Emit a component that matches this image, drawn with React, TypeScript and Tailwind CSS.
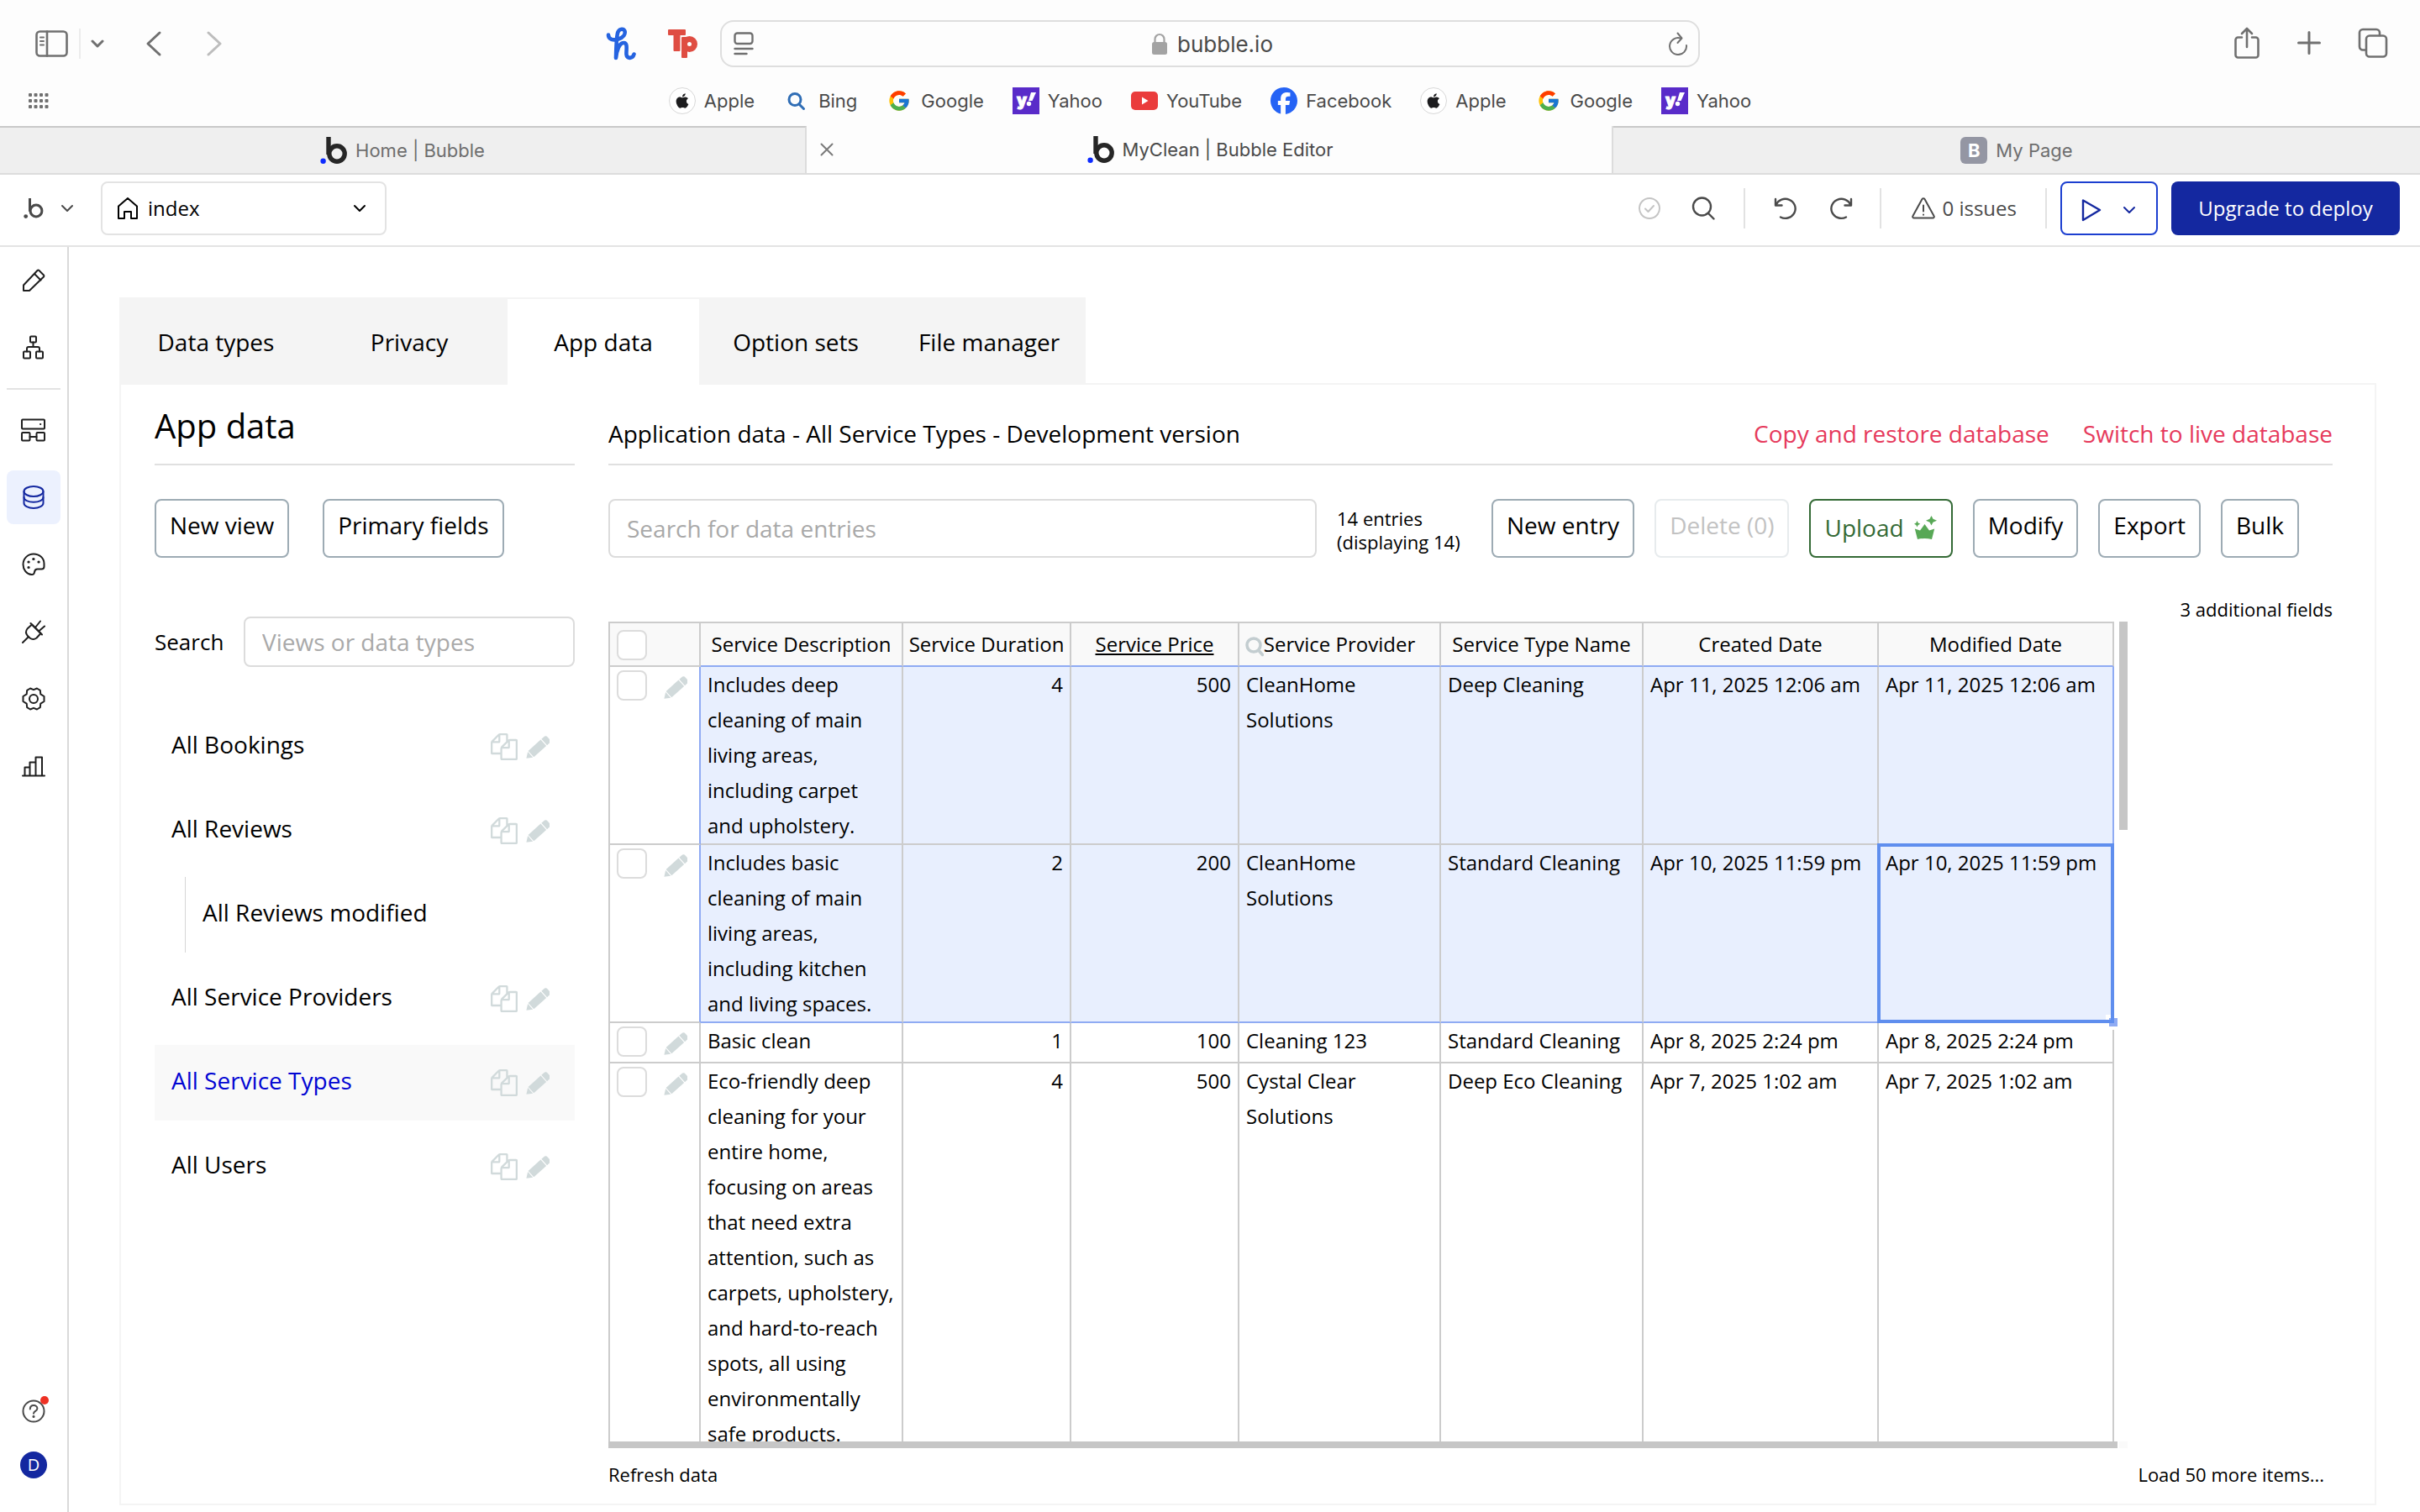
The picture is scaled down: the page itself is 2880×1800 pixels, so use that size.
import React from "react";
import { FaApple, FaFacebook } from "react-icons/fa6";
import { FcGoogle } from "react-icons/fc";

type IconProps = { className?: string };

function Stroke({
  className = "size-8",
  width = 2,
  box = "0 0 32 32",
  children,
}: {
  className?: string;
  width?: number;
  box?: string;
  children: React.ReactNode;
}) {
  return (
    <svg
      viewBox={box}
      className={className}
      fill="none"
      stroke="currentColor"
      strokeWidth={width}
      strokeLinecap="round"
      strokeLinejoin="round"
      aria-hidden="true"
    >
      {children}
    </svg>
  );
}

function Chevron({ className = "size-4" }: IconProps) {
  return (
    <Stroke className={className} box="0 0 16 16">
      <path d="M2 5l6 6 6-6" />
    </Stroke>
  );
}

function BubbleLogo({
  className = "size-8",
  dot = "#0d2bff",
  weight = 5.4,
}: IconProps & { dot?: string; weight?: number }) {
  return (
    <svg viewBox="0 0 32 32" className={className} fill="none" aria-hidden="true">
      <circle cx="20" cy="20" r="9.2" stroke="currentColor" strokeWidth={weight} />
      <path d="M10 0v21" stroke="currentColor" strokeWidth={weight} />
      <circle cx="3.6" cy="28.8" r="3.2" fill={dot} />
    </svg>
  );
}

function HoneyLogo() {
  return (
    <svg viewBox="0 0 36 40" className="h-10 w-9" fill="none" stroke="#2563e0" strokeLinecap="round" strokeLinejoin="round" aria-hidden="true">
      <path
        strokeWidth="4.6"
        d="M3 9.500C3 15 9 16.500 15 14.500C21 12.500 23.500 8.500 22.500 5C21.500 2 16.500 1.800 14.500 6C12.500 10.500 12.500 20 12 37C13 28 16 19 21.500 19C26.500 19 24 28 24.500 33C25 38.500 32 38 33.500 32.500"
      />
    </svg>
  );
}

function TpLogo() {
  return (
    <svg viewBox="0 0 36 36" className="size-9" fill="#df4d42" aria-hidden="true">
      <rect x="0" y="1" width="21" height="7" rx="1" />
      <rect x="6.500" y="1" width="8" height="26" rx="1" />
      <rect x="16" y="10" width="7" height="25" rx="1" />
      <circle cx="25.500" cy="18.500" r="6" fill="none" stroke="#df4d42" strokeWidth="7" />
    </svg>
  );
}

function YahooLogo() {
  return (
    <svg viewBox="0 0 32 32" className="size-8" aria-hidden="true">
      <rect width="32" height="32" fill="#592bc9" />
      <text x="5" y="22" fill="#fff" stroke="#fff" fontFamily="Inter, sans-serif" fontWeight="900" fontSize="19">y</text>
      <path d="M22 6h6l-4.500 10h-4.500z" fill="#fff" />
      <circle cx="19.500" cy="19.500" r="2.700" fill="#fff" />
    </svg>
  );
}

function YouTubeLogo() {
  return (
    <svg viewBox="0 0 32 32" className="size-8" aria-hidden="true">
      <rect y="5" width="32" height="22" rx="5" fill="#ea3c3c" />
      <path d="M13 11.500v9l7.500-4.500z" fill="#fff" />
    </svg>
  );
}

function AppleLogo() {
  return (
    <span className="flex size-8 items-center justify-center rounded-full border border-[#d8d8d8] bg-white text-[#1c1c1e]">
      <FaApple className="size-5" />
    </span>
  );
}

function BingLogo() {
  return (
    <Stroke className="size-8 text-[#2f6db5]" width={3}>
      <circle cx="14" cy="14.500" r="7" />
      <path d="M19 20l5.500 5.500" />
    </Stroke>
  );
}

function GoogleLogo() {
  return (
    <span className="flex size-8 items-center justify-center">
      <FcGoogle className="size-7" />
    </span>
  );
}

function FacebookLogo() {
  return <FaFacebook className="size-8 text-[#2563f5]" />;
}

function PencilIcon() {
  return (
    <svg viewBox="0 0 28 28" className="size-7" fill="#d1dadb" aria-hidden="true">
      <g transform="translate(0 28) rotate(-42)">
        <path d="M0.500 0l6.500-4.500v9z" />
        <path d="M8 -5h20v10h-20z" />
        <path d="M29.200 -5h3.500q3.500 0 3.500 3.500v3q0 3.500-3.500 3.500h-3.500z" />
      </g>
    </svg>
  );
}

function CopyIcon() {
  return (
    <svg viewBox="0 0 1792 1792" className="size-8" fill="#d1dadb" aria-hidden="true">
      <path d="M1696 384q40 0 68 28t28 68v1216q0 40-28 68t-68 28h-960q-40 0-68-28t-28-68v-288h-544q-40 0-68-28t-28-68v-672q0-40 20-88t48-76l408-408q28-28 76-48t88-20h416q40 0 68 28t28 68v328q68-40 128-40h416zm-544 213l-299 299h299v-299zm-640-384l-299 299h299v-299zm196 647l316-316v-416h-384v416q0 40-28 68t-68 28h-416v640h512v-256q0-40 20-88t48-76zm956 804v-1152h-384v416q0 40-28 68t-68 28h-416v640h896z" />
    </svg>
  );
}

function CrownIcon() {
  return (
    <svg viewBox="0 0 28 28" className="size-7" fill="#58a856" aria-hidden="true">
      <path d="M0.800 15.500l6.200 2 5.500-7.500 5.500 7.500 6.200-2-3.200 12.500q-8.500-2-17 0z" />
      <path d="M20.500 0l2 3.700 4.500 2-4.500 2-2 3.700-2-3.700-4.500-2 4.500-2z" />
      <path d="M3.500 6l1.200 2.600 2.600 1.200-2.600 1.200-1.200 2.600-1.200-2.600-2.300-1.200 2.300-1.200z" />
    </svg>
  );
}

const favorites = [
  { label: "Apple", Icon: AppleLogo },
  { label: "Bing", Icon: BingLogo },
  { label: "Google", Icon: GoogleLogo },
  { label: "Yahoo", Icon: YahooLogo },
  { label: "YouTube", Icon: YouTubeLogo },
  { label: "Facebook", Icon: FacebookLogo },
  { label: "Apple", Icon: AppleLogo },
  { label: "Google", Icon: GoogleLogo },
  { label: "Yahoo", Icon: YahooLogo },
];

function BrowserChrome() {
  return (
    <header className="shrink-0 bg-[#fdfdfd] font-['Inter',sans-serif] text-[22px] text-[#4a4a4a]">
      <div className="grid h-[104px] grid-cols-[857px_1fr_857px] items-center text-[#707070]">
        <div className="flex items-center">
          <button aria-label="Show sidebar" className="ml-[42px]">
            <Stroke className="h-8 w-10" box="0 0 40 32" width={2.6}>
              <rect x="1.500" y="1.500" width="36" height="29" rx="4" />
              <path d="M14 1.500v29" />
              <path d="M6 8.500h4M6 13h4M6 17.500h4" strokeWidth="2" />
            </Stroke>
          </button>
          <span className="ml-3 h-9 w-0.5 bg-[#ececec]" />
          <button aria-label="Tab groups" className="ml-3">
            <Stroke className="size-4" box="0 0 16 16" width={3}>
              <path d="M2 5l6 6 6-6" />
            </Stroke>
          </button>
          <button aria-label="Back" className="ml-[49px]">
            <Stroke className="h-8 w-5" box="0 0 20 32" width={3}>
              <path d="M17 3L3 16l14 13" />
            </Stroke>
          </button>
          <button aria-label="Forward" className="ml-[52px] text-[#bdbdbd]">
            <Stroke className="h-8 w-5" box="0 0 20 32" width={3}>
              <path d="M3 3l14 13L3 29" />
            </Stroke>
          </button>
          <div className="mr-[26px] ml-auto flex items-center gap-[38px]">
            <button aria-label="Honey"><HoneyLogo /></button>
            <button aria-label="Toolbar extension"><TpLogo /></button>
          </div>
        </div>
        <div className="flex h-14 items-center rounded-2xl border-2 border-[#dedede] pr-3 pl-3.5">
          <button aria-label="Page settings">
            <Stroke className="h-7 w-6" box="0 0 24 28" width={2.4}>
              <rect x="1.500" y="1.500" width="21" height="12.500" rx="3" />
              <path d="M1.500 20h21M1.500 26h14" />
            </Stroke>
          </button>
          <div className="ml-1 flex flex-1 items-center justify-center gap-3">
            <svg viewBox="0 0 18 26" className="h-[26px] w-[18px]" aria-hidden="true">
              <rect y="11" width="18" height="15" rx="2.500" fill="#a3a3a3" />
              <path d="M3.500 12V7.500a5.500 5.500 0 0 1 11 0V12" fill="none" stroke="#a3a3a3" strokeWidth="2.200" />
            </svg>
            <input
              aria-label="Address"
              defaultValue="bubble.io"
              className="field-sizing-content bg-transparent text-[26px] text-[#4a4a4a] outline-none"
            />
          </div>
          <button aria-label="Reload">
            <Stroke className="h-7 w-6" box="0 0 24 28" width={2}>
              <path d="M15 7.500A10 10 0 1 0 22 16" />
              <path d="M11.500 1.500l5 6-5 5.500" />
            </Stroke>
          </button>
        </div>
        <div className="flex items-center justify-end gap-11 pr-[38px] pb-0.5">
          <button aria-label="Share">
            <Stroke className="h-10 w-8" box="0 0 32 40" width={2.6}>
              <path d="M10 13.500H5.500a3 3 0 0 0-3 3v18a3 3 0 0 0 3 3h21a3 3 0 0 0 3-3v-18a3 3 0 0 0-3-3H22" />
              <path d="M16 25V3M10 9l6-6 6 6" />
            </Stroke>
          </button>
          <button aria-label="New tab">
            <Stroke className="size-7" box="0 0 28 28" width={3}>
              <path d="M14 1.500v25M1.500 14h25" />
            </Stroke>
          </button>
          <button aria-label="Show all tabs">
            <Stroke className="size-9" box="0 0 36 36" width={2.6}>
              <rect x="10" y="9.500" width="24" height="25" rx="4" />
              <path d="M9.500 26.500H6a4 4 0 0 1-4-4V6a4 4 0 0 1 4-4h16a4 4 0 0 1 4 4v3" />
            </Stroke>
          </button>
        </div>
      </div>
      <div className="grid h-[46px] grid-cols-[1fr_auto_1fr] items-start">
        <button aria-label="Favorites grid" className="ml-[34px] mt-[7px] w-6 text-[#707070]">
          <svg viewBox="0 0 24 18" className="h-[18px] w-6" fill="currentColor" aria-hidden="true">
            {[0, 7, 14].map((y) =>
              [0, 6.5, 13, 19.5].map((x) => <rect key={`${x}-${y}`} x={x} y={y} width="4" height="4" rx="1" />)
            )}
          </svg>
        </button>
        <nav aria-label="Favorites" className="flex h-8 items-center gap-[34px]">
          {favorites.map(({ label, Icon }, i) => (
            <a key={i} href="#" className="flex items-center gap-2.5">
              <Icon />
              {label}
            </a>
          ))}
        </nav>
        <span />
      </div>
      <div role="tablist" aria-label="Browser tabs" className="grid h-[58px] grid-cols-3 border-b-2 border-[#dcdcdc]">
        <button role="tab" className="flex items-center justify-center gap-2.5 border-t-2 border-r-2 border-t-[#c9c9c9] border-r-[#dcdcdc] bg-[#efefef] text-[#6e6e6e]">
          <BubbleLogo className="size-8 text-[#262626]" />
          Home | Bubble
        </button>
        <div className="flex items-center border-r-2 border-[#dcdcdc]">
          <button aria-label="Close tab" className="ml-4 w-4 text-[#7a7a7a]">
            <Stroke className="size-4" box="0 0 16 16">
              <path d="M1.500 1.500l13 13M14.500 1.500l-13 13" />
            </Stroke>
          </button>
          <button role="tab" aria-selected="true" className="mr-[30px] flex flex-1 items-center justify-center gap-2.5">
            <BubbleLogo className="size-8 text-[#262626]" />
            MyClean | Bubble Editor
          </button>
        </div>
        <button role="tab" className="flex items-center justify-center gap-2.5 border-t-2 border-[#c9c9c9] bg-[#efefef] text-[#6e6e6e]">
          <span className="flex size-8 items-center justify-center rounded-md bg-[#9496a3] font-bold text-white">B</span>
          My Page
        </button>
      </div>
    </header>
  );
}

function Separator() {
  return <span className="h-12 w-0.5 shrink-0 bg-[#e2e2e2]" />;
}

function EditorBar() {
  return (
    <div className="flex h-[86px] shrink-0 items-center border-b-2 border-[#e3e3e3] pr-6 pb-1 text-2xl text-[#4a4a4a]">
      <button aria-label="Bubble menu" className="ml-7 flex w-[92px] items-center gap-5">
        <BubbleLogo className="size-6" dot="#4a4a4a" weight={4} />
        <Chevron />
      </button>
      <div className="relative h-16 w-[340px]">
        <select
          aria-label="Page"
          className="h-full w-full appearance-none rounded-lg border-2 border-[#e3e3e3] bg-white pl-[54px] text-black"
        >
          <option>index</option>
        </select>
        <Stroke className="pointer-events-none absolute top-[18px] left-[18px] size-7 text-black" box="0 0 28 28">
          <path d="M3 11.500L14 2l11 9.500V26h-7v-8h-8v8H3z" />
        </Stroke>
        <Chevron className="pointer-events-none absolute top-6 right-6 size-4 text-black" />
      </div>
      <div className="ml-auto flex items-center">
        <Stroke className="size-7 text-[#c4c4c4]" box="0 0 28 28">
          <circle cx="14" cy="14" r="12" />
          <path d="M9 14.500l3.500 3.500 6.500-7" />
        </Stroke>
        <button aria-label="Search" className="ml-9">
          <Stroke className="size-7" box="0 0 28 28" width={2.4}>
            <circle cx="12.500" cy="12" r="10.500" />
            <path d="M20 20l6.500 6.500" />
          </Stroke>
        </button>
        <span className="mx-[34px] flex"><Separator /></span>
        <button aria-label="Undo">
          <Stroke className="size-7" box="0 0 28 28" width={2.4}>
            <path d="M2 3v7.500h7.500" />
            <path d="M2.500 10A12 11.500 0 1 1 8 24.500" />
          </Stroke>
        </button>
        <button aria-label="Redo" className="ml-[38px]">
          <Stroke className="size-7" box="0 0 28 28" width={2.4}>
            <path d="M26 3v7.500h-7.500" />
            <path d="M25.500 10A12 11.500 0 1 0 20 24.500" />
          </Stroke>
        </button>
        <span className="mr-9 ml-8 flex"><Separator /></span>
        <button className="flex items-center gap-2 font-medium">
          <Stroke className="size-7" box="0 0 28 28">
            <path d="M12.500 3a1.800 1.800 0 0 1 3 0l11 20a1.600 1.600 0 0 1-1.500 2.500H3a1.600 1.600 0 0 1-1.500-2.500z" />
            <path d="M14 10.500v7M14 21.500v.3" />
          </Stroke>
          0 issues
        </button>
        <span className="mr-4 ml-[34px] flex"><Separator /></span>
        <button aria-label="Preview" className="flex h-16 w-[116px] items-center justify-between rounded-lg border-2 border-[#1c3fd0] pt-1 pr-6 pl-[22px] text-[#1428a0]">
          <Stroke className="size-7" box="0 0 28 28" width={2.4}>
            <path d="M3 2.500v23.500l20-12z" />
          </Stroke>
          <Chevron />
        </button>
        <button className="ml-4 h-16 w-[272px] rounded-lg bg-[#1428a0] text-white">Upgrade to deploy</button>
      </div>
    </div>
  );
}

const railIcons = {
  Design: (
    <>
      <path d="M4 28v-6.500L20.500 4a1.500 1.500 0 0 1 2 0l5.500 5.500a1.500 1.500 0 0 1 0 2L11 28z" />
      <path d="M17 8l7.500 7.500" />
    </>
  ),
  Workflow: (
    <>
      <rect x="12" y="2.500" width="7" height="7" rx="1" />
      <rect x="4" y="20.500" width="8" height="8" rx="1" />
      <rect x="19" y="20.500" width="8" height="8" rx="1" />
      <path d="M15.500 9.500V15M8 20.500V17q0-2 2-2h11q2 0 2 2v3.500" />
    </>
  ),
  Components: (
    <>
      <rect x="2" y="3.500" width="27" height="11" rx="1" />
      <rect x="2" y="19" width="9.500" height="9.500" rx="1" />
      <rect x="19.500" y="19" width="9.500" height="9.500" rx="1" />
      <path d="M11.500 24h8M24 9h.3" />
    </>
  ),
  Data: (
    <>
      <ellipse cx="16" cy="9" rx="11.500" ry="6" />
      <path d="M4.500 9v14c0 3.300 5 6 11.500 6s11.500-2.700 11.500-6V9" />
      <path d="M4.500 16c0 3.300 5 5.800 11.500 5.800s11.500-2.500 11.500-5.800" />
    </>
  ),
  Styles: (
    <>
      <path d="M16 3.500c7 0 12.500 5 12.500 11.500v3.500q0 3-3 3h-5q-3 0-3.500 3.500t-3.500 3C7.500 27.500 3.500 22 3.500 16 3.500 9 9 3.500 16 3.500z" />
      <g strokeWidth="3.200">
        <path d="M15.800 9.500h.2M22 13h.1M10 13h.1M10 19.500h.1" />
      </g>
    </>
  ),
  Plugins: (
    <>
      <path d="M14 7.500L24.500 18l-5 5.500q-4 3-8 0l-3-3q-3-4 0-8z" />
      <path d="M9.500 22.500L3 29M18 11l6-7.500M22 15.500l7-6M12.500 6L26 19.500" />
    </>
  ),
  Settings: (
    <>
      <circle cx="16" cy="16" r="5" />
      <path d="M12 3.500l4 1.700 4-1.700 3.800 2.300.5 4.500 4.200 2.700v6l-4.200 2.700-.5 4.500L20 28.500l-4-1.700-4 1.700-3.800-2.300-.5-4.500L3.500 19v-6l4.200-2.700.5-4.500z" />
    </>
  ),
  Logs: (
    <>
      <path d="M3 27.500h26M5.500 27.500V17.500h6M11.500 27.500V11.500h7M18.500 27.500V5.500h7.500v22" />
    </>
  ),
};

function RailButton({ name, active = false }: { name: keyof typeof railIcons; active?: boolean }) {
  return (
    <button
      aria-label={name}
      className={
        active
          ? "flex size-16 items-center justify-center rounded-lg bg-[#ecf1fe] text-[#1428a0]"
          : "flex size-16 items-center justify-center text-[#1f1f1f]"
      }
    >
      <Stroke className="size-8">{railIcons[name]}</Stroke>
    </button>
  );
}

function Rail() {
  return (
    <nav aria-label="Editor sections" className="flex w-[82px] shrink-0 flex-col items-center gap-4 border-r-2 border-[#dadada] pt-2 pb-10">
      <RailButton name="Design" />
      <RailButton name="Workflow" />
      <span className="h-0.5 w-16 bg-[#e3e3e3]" />
      <RailButton name="Components" />
      <RailButton name="Data" active />
      <RailButton name="Styles" />
      <RailButton name="Plugins" />
      <RailButton name="Settings" />
      <RailButton name="Logs" />
      <button aria-label="Help" className="relative mt-auto mb-[18px] text-[#4a4a4a]">
        <Stroke className="size-7" box="0 0 28 28">
          <circle cx="14" cy="14" r="12.500" />
          <path d="M9.800 11.500c0-6 8.600-5.500 8.600-.8 0 3.300-4.400 3-4.400 6" />
          <path d="M14 20.300v.3" strokeWidth="3" />
        </Stroke>
        <span className="absolute -top-1 -right-1 size-2.5 rounded-full bg-[#ee3124]" />
      </button>
      <button aria-label="Account" className="flex size-8 items-center justify-center rounded-full bg-[#1428a0] text-xl leading-none text-white">
        D
      </button>
    </nav>
  );
}

const views = [
  { label: "All Bookings" },
  { label: "All Reviews" },
  { label: "All Reviews modified", child: true },
  { label: "All Service Providers" },
  { label: "All Service Types", selected: true },
  { label: "All Users" },
];

function ViewsColumn() {
  return (
    <aside className="flex w-[500px] shrink-0 flex-col">
      <h1 className="flex h-24 items-center border-b-2 border-[#e0e0e0] pt-1 text-[40px]">App data</h1>
      <div className="mt-10 flex gap-10">
        <ActionButton>New view</ActionButton>
        <ActionButton>Primary fields</ActionButton>
      </div>
      <div className="mt-[70px] flex h-[60px] items-center">
        <label htmlFor="view-search" className="w-[106px] text-[26px]">Search</label>
        <input
          id="view-search"
          placeholder="Views or data types"
          className="h-full min-w-0 flex-1 rounded-lg border-2 border-[#dcdcdc] px-5 placeholder:text-[#a9a9a9]"
        />
      </div>
      <ul className="mt-[50px] flex flex-col gap-2.5">
        {views.map((v) =>
          v.child ? (
            <li key={v.label} className="ml-9 flex h-[90px] items-center border-l border-[#d5d5d5] pb-1.5 pl-5">
              <a href="#">{v.label}</a>
            </li>
          ) : (
            <li
              key={v.label}
              className={
                v.selected
                  ? "flex h-[90px] items-center bg-[#f9f9f9] pr-[30px] pl-5 text-[#0205d3]"
                  : "flex h-[90px] items-center pr-[30px] pl-5"
              }
            >
              <a href="#" className="flex-1 pb-1.5">{v.label}</a>
              <button aria-label={`Copy ${v.label}`} className="mr-2.5"><CopyIcon /></button>
              <button aria-label={`Edit ${v.label}`}><PencilIcon /></button>
            </li>
          )
        )}
      </ul>
    </aside>
  );
}

function ActionButton({ children, disabled = false }: { children: React.ReactNode; disabled?: boolean }) {
  return (
    <button
      disabled={disabled}
      className={
        disabled
          ? "h-[70px] rounded-lg border-2 border-[#e7ebed] px-4 pb-2 whitespace-nowrap text-[#c2c2c2]"
          : "h-[70px] rounded-lg border-2 border-[#9dabb4] px-4 pb-2 whitespace-nowrap"
      }
    >
      {children}
    </button>
  );
}

type Entry = {
  description: string;
  duration: string;
  price: string;
  provider: string;
  type: string;
  created: string;
  modified: string;
};

const entries: Entry[] = [
  {
    description: "Includes deep cleaning of main living areas, including carpet and upholstery.",
    duration: "4",
    price: "500",
    provider: "CleanHome Solutions",
    type: "Deep Cleaning",
    created: "Apr 11, 2025 12:06 am",
    modified: "Apr 11, 2025 12:06 am",
  },
  {
    description: "Includes basic cleaning of main living areas, including kitchen and living spaces.",
    duration: "2",
    price: "200",
    provider: "CleanHome Solutions",
    type: "Standard Cleaning",
    created: "Apr 10, 2025 11:59 pm",
    modified: "Apr 10, 2025 11:59 pm",
  },
  {
    description: "Basic clean",
    duration: "1",
    price: "100",
    provider: "Cleaning 123",
    type: "Standard Cleaning",
    created: "Apr 8, 2025 2:24 pm",
    modified: "Apr 8, 2025 2:24 pm",
  },
  {
    description:
      "Eco-friendly deep cleaning for your entire home, focusing on areas that need extra attention, such as carpets, upholstery, and hard-to-reach spots, all using environmentally safe products.",
    duration: "4",
    price: "500",
    provider: "Cystal Clear Solutions",
    type: "Deep Eco Cleaning",
    created: "Apr 7, 2025 1:02 am",
    modified: "Apr 7, 2025 1:02 am",
  },
];

const checkboxClass = "block size-9 shrink-0 appearance-none rounded-lg border-2 border-[#dcdcdc] bg-white";

const tones = {
  plain: "border-[#cccccc]",
  selected: "border-[#cccccc] bg-[#e8effe]",
  selectedLast: "border-r-[#cccccc] border-b-[#8fabf3] bg-[#e8effe]",
};

function EntryRow({ entry, index }: { entry: Entry; index: number }) {
  const tone = index === 0 ? tones.selected : index === 1 ? tones.selectedLast : tones.plain;
  const current = index === 1;
  const cell = `border-r-2 border-b-2 px-2 ${tone}`;
  return (
    <tr className="h-12 align-top">
      <td
        className={
          index < 2
            ? "border-r-2 border-b-2 border-l-2 border-[#cccccc] border-r-[#8fabf3] pt-1"
            : "border-r-2 border-b-2 border-l-2 border-[#cccccc] pt-1"
        }
      >
        <div className="flex items-start pl-2">
          <input type="checkbox" aria-label={`Select ${entry.type} entry`} className={checkboxClass} />
          <button aria-label={`Edit ${entry.type} entry`} className="mt-1.5 ml-5"><PencilIcon /></button>
        </div>
      </td>
      <td className={cell}>{entry.description}</td>
      <td className={`${cell} text-right`}>{entry.duration}</td>
      <td className={`${cell} text-right`}>{entry.price}</td>
      <td className={cell}>{entry.provider}</td>
      <td className={cell}>{entry.type}</td>
      <td className={cell}>{entry.created}</td>
      <td className={index === 0 ? "border-r-2 border-b-2 border-[#cccccc] border-r-[#8fabf3] bg-[#e8effe] px-2" : `relative ${cell}`}>
        {entry.modified}
        {current && (
          <>
            <span className="absolute -right-2.5 -bottom-2.5 z-10 size-[18px] border-4 border-white bg-[#8fabf3]" />
            <span className="absolute -inset-0.5 z-20 border-4 border-[#5f8eee]" />
          </>
        )}
      </td>
    </tr>
  );
}

function EntriesTable() {
  const head = "border-t-2 border-r-2 border-b-2 border-[#cccccc] border-b-[#8fabf3] bg-[#f9f9f9] font-normal whitespace-nowrap";
  return (
    <table className="w-[1792px] table-fixed border-separate border-spacing-0 text-2xl leading-[42px]">
      <colgroup>
        <col className="w-[110px]" />
        <col className="w-[241px]" />
        <col className="w-[200px]" />
        <col className="w-[200px]" />
        <col className="w-[240px]" />
        <col className="w-[241px]" />
        <col className="w-[280px]" />
        <col className="w-[280px]" />
      </colgroup>
      <thead>
        <tr className="h-[54px]">
          <th className="border-2 border-[#cccccc] bg-[#f9f9f9] pt-0.5">
            <input type="checkbox" aria-label="Select all entries" className={`ml-2 ${checkboxClass}`} />
          </th>
          <th className={head}>Service Description</th>
          <th className={head}>Service Duration</th>
          <th className={head}><span className="underline">Service Price</span></th>
          <th className={head}>
            <span className="relative">
              <Stroke className="absolute top-2 right-full size-6 text-[#c3cdd0]" box="0 0 24 24" width={3.5}>
                <circle cx="12" cy="10" r="8" />
                <path d="M18 16.500l4.500 5" />
              </Stroke>
              Service Provider
            </span>
          </th>
          <th className={head}>Service Type Name</th>
          <th className={head}>Created Date</th>
          <th className={head}>Modified Date</th>
        </tr>
      </thead>
      <tbody>
        {entries.map((entry, i) => (
          <EntryRow key={i} entry={entry} index={i} />
        ))}
      </tbody>
    </table>
  );
}

function DataColumn() {
  return (
    <section className="flex min-h-0 min-w-0 flex-1 flex-col">
      <div className="flex h-24 shrink-0 items-center gap-10 border-b-2 border-[#e0e0e0] pt-[22px]">
        <h2 className="mr-auto">Application data - All Service Types - Development version</h2>
        <a href="#" className="text-[#e63a5c]">Copy and restore database</a>
        <a href="#" className="text-[#e63a5c]">Switch to live database</a>
      </div>
      <div className="mt-10 flex shrink-0 items-center gap-6 pr-10">
        <input
          aria-label="Search for data entries"
          placeholder="Search for data entries"
          className="h-[70px] min-w-0 flex-1 rounded-lg border-2 border-[#dcdcdc] px-5 placeholder:text-[#a9a9a9]"
        />
        <p className="w-40 pt-1 text-[22px] leading-7">
          14 entries
          <br />
          (displaying 14)
        </p>
        <ActionButton>New entry</ActionButton>
        <ActionButton disabled>Delete (0)</ActionButton>
        <button className="flex h-[70px] items-center gap-3 rounded-lg border-2 border-[#346a36] px-4 pb-0.5 text-[#346a36]">
          Upload
          <CrownIcon />
        </button>
        <ActionButton>Modify</ActionButton>
        <ActionButton>Export</ActionButton>
        <ActionButton>Bulk</ActionButton>
      </div>
      <p className="mt-12 mb-px h-[27px] shrink-0 text-right text-[22px] leading-[27px]">3 additional fields</p>
      <div className="flex min-h-0 flex-1 gap-0.5">
        <div className="w-[1796px] overflow-hidden">
          <EntriesTable />
        </div>
        <div className="w-2.5">
          <div className="h-[248px] bg-[#c6c6c6]" />
        </div>
      </div>
      <div className="flex h-2 shrink-0 gap-0.5">
        <div className="w-[1796px] bg-[#c6c6c6]" />
        <div className="w-2.5 bg-[#fafafa]" />
      </div>
      <div className="flex h-[66px] shrink-0 items-center justify-between pr-2.5 pb-1 text-[22px]">
        <button>Refresh data</button>
        <button>Load 50 more items...</button>
      </div>
    </section>
  );
}

const tabs = ["Data types", "Privacy", "App data", "Option sets", "File manager"];

export default function App() {
  return (
    <div className="flex h-screen flex-col overflow-hidden bg-white font-['Open_Sans',sans-serif] text-black">
      <BrowserChrome />
      <EditorBar />
      <div className="flex min-h-0 flex-1">
        <Rail />
        <main className="flex min-w-0 flex-1 flex-col pt-[60px] pr-[52px] pb-2 pl-[60px] text-[28px]">
          <div role="tablist" aria-label="Data sections" className="flex h-[104px] shrink-0">
            {tabs.map((tab) => (
              <button
                key={tab}
                role="tab"
                aria-selected={tab === "App data"}
                className={
                  tab === "App data"
                    ? "w-[230px] border-t-2 border-l-2 border-[#f4f4f4] bg-white"
                    : "w-[230px] bg-[#f4f4f4] pt-0.5"
                }
              >
                {tab}
              </button>
            ))}
            <span className="flex-1 border-b-2 border-[#f4f4f4]" />
          </div>
          <div className="flex min-h-0 flex-1 gap-10 border-x-2 border-b-2 border-[#f4f4f4] pr-[50px] pl-10">
            <ViewsColumn />
            <DataColumn />
          </div>
        </main>
      </div>
    </div>
  );
}
